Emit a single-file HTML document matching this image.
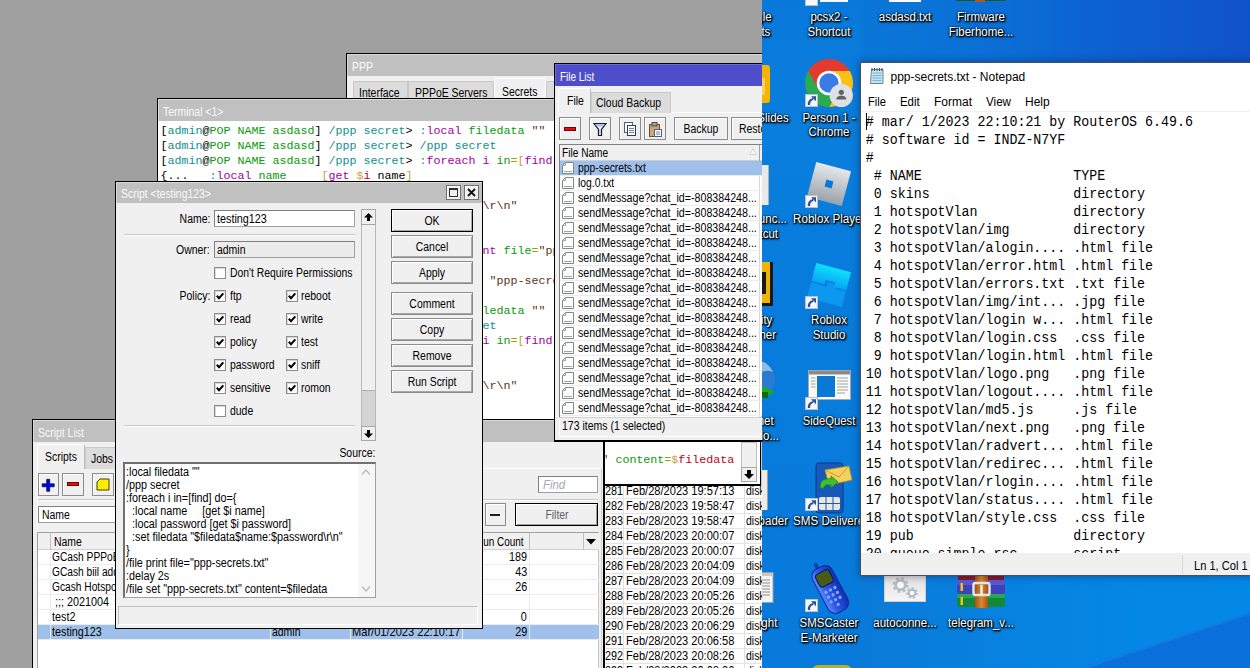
<!DOCTYPE html>
<html><head><meta charset="utf-8"><title>screen</title><style>
html,body{margin:0;padding:0;background:#a0a0a0;}
#r{position:relative;width:1250px;height:668px;overflow:hidden;background:#a0a0a0;font-family:"Liberation Sans",sans-serif;}
#r div,#r span,#r svg{position:absolute;box-sizing:border-box;}
#r span span{position:static;}
#wb{left:0;top:0;width:1250px;height:668px;clip-path:inset(0 488px 0 0);}
.ts{font-family:"Liberation Sans",sans-serif;white-space:pre;}
.tm{font-family:"Liberation Mono",monospace;white-space:pre;}
.btn{background:#f0f0f0;border:1px solid #8c8c8c;box-shadow:inset 1px 1px 0 #fff;}
.inp{background:#fff;border:1px solid #a0a0a0;border-top-color:#808080;border-left-color:#808080;}
</style></head><body><div id="r">
<div style="left:762px;top:0px;width:488px;height:668px;background:linear-gradient(180deg,#0879da 0%,#0a7edd 20%,#087cdc 45%,#077adb 100%);"></div>
<div style="left:860px;top:0px;width:390px;height:80px;background:linear-gradient(90deg,#0a78d8 0%,#0b6ed6 35%,#0d60d0 65%,#1052cb 100%);"></div>
<div style="left:860px;top:560px;width:390px;height:108px;background:linear-gradient(90deg,#0a7ad8 0%,#0782e0 40%,#0487e5 75%,#0488e6 100%);"></div>
<svg style="left:762px;top:0;width:488px;height:668px" viewBox="0 0 488 668"><polygon points="318,668 488,612 488,668" fill="#0a70dc"/><polygon points="318,668 488,612 488,614 326,668" fill="#1a86ea" opacity=".6"/></svg>
<div id="wb">
<div style="left:346px;top:53px;width:420px;height:60px;background:#f0f0f0;border:1px solid #000;"></div>
<div style="left:347px;top:54px;width:420px;height:22px;background:#c0c0c0;border-top:1px solid #dadada;border-left:1px solid #dadada;"></div>
<span class="ts" style="left:352px;transform-origin:0 50%;top:59.599999999999994px;font-size:12px;line-height:14px;color:#fafafa;transform:scaleX(0.87);">PPP</span>
<div style="left:353px;top:81px;width:55px;height:20px;background:#dcdcdc;border:1px solid #c8c8c8;border-bottom:none;"></div>
<div style="left:408px;top:81px;width:86px;height:20px;background:#dcdcdc;border:1px solid #c8c8c8;border-bottom:none;"></div>
<div style="left:494px;top:78px;width:52px;height:22px;background:#f0f0f0;border:1px solid #fff;border-bottom:none;"></div>
<div style="left:546px;top:81px;width:30px;height:20px;background:#dcdcdc;border:1px solid #c8c8c8;border-bottom:none;"></div>
<span class="ts" style="left:359px;transform-origin:0 50%;top:85.7px;font-size:12px;line-height:14px;color:#000;transform:scaleX(0.87);">Interface</span>
<span class="ts" style="left:415px;transform-origin:0 50%;top:85.7px;font-size:12px;line-height:14px;color:#000;transform:scaleX(0.87);">PPPoE Servers</span>
<span class="ts" style="left:502px;transform-origin:0 50%;top:84.5px;font-size:12px;line-height:14px;color:#000;transform:scaleX(0.87);">Secrets</span>
<div style="left:604px;top:441px;width:158px;height:240px;background:#fff;border-left:1px solid #000;"></div>
<div style="left:605px;top:497.5px;width:157px;height:1px;background:#e4e4e4;"></div>
<span class="ts" style="left:605px;transform-origin:0 50%;top:483.5px;font-size:12px;line-height:14px;color:#000;transform:scaleX(0.9);">281</span>
<span class="ts" style="left:626px;transform-origin:0 50%;top:483.5px;font-size:12px;line-height:14px;color:#000;transform:scaleX(0.923);">Feb/28/2023 19:57:13</span>
<span class="ts" style="left:746px;transform-origin:0 50%;top:483.5px;font-size:12px;line-height:14px;color:#000;transform:scaleX(0.87);">disk</span>
<div style="left:605px;top:512.5px;width:157px;height:1px;background:#e4e4e4;"></div>
<span class="ts" style="left:605px;transform-origin:0 50%;top:498.5px;font-size:12px;line-height:14px;color:#000;transform:scaleX(0.9);">282</span>
<span class="ts" style="left:626px;transform-origin:0 50%;top:498.5px;font-size:12px;line-height:14px;color:#000;transform:scaleX(0.923);">Feb/28/2023 19:58:47</span>
<span class="ts" style="left:746px;transform-origin:0 50%;top:498.5px;font-size:12px;line-height:14px;color:#000;transform:scaleX(0.87);">disk</span>
<div style="left:605px;top:527.5px;width:157px;height:1px;background:#e4e4e4;"></div>
<span class="ts" style="left:605px;transform-origin:0 50%;top:513.5px;font-size:12px;line-height:14px;color:#000;transform:scaleX(0.9);">283</span>
<span class="ts" style="left:626px;transform-origin:0 50%;top:513.5px;font-size:12px;line-height:14px;color:#000;transform:scaleX(0.923);">Feb/28/2023 19:58:47</span>
<span class="ts" style="left:746px;transform-origin:0 50%;top:513.5px;font-size:12px;line-height:14px;color:#000;transform:scaleX(0.87);">disk</span>
<div style="left:605px;top:542.5px;width:157px;height:1px;background:#e4e4e4;"></div>
<span class="ts" style="left:605px;transform-origin:0 50%;top:528.5px;font-size:12px;line-height:14px;color:#000;transform:scaleX(0.9);">284</span>
<span class="ts" style="left:626px;transform-origin:0 50%;top:528.5px;font-size:12px;line-height:14px;color:#000;transform:scaleX(0.923);">Feb/28/2023 20:00:07</span>
<span class="ts" style="left:746px;transform-origin:0 50%;top:528.5px;font-size:12px;line-height:14px;color:#000;transform:scaleX(0.87);">disk</span>
<div style="left:605px;top:557.5px;width:157px;height:1px;background:#e4e4e4;"></div>
<span class="ts" style="left:605px;transform-origin:0 50%;top:543.5px;font-size:12px;line-height:14px;color:#000;transform:scaleX(0.9);">285</span>
<span class="ts" style="left:626px;transform-origin:0 50%;top:543.5px;font-size:12px;line-height:14px;color:#000;transform:scaleX(0.923);">Feb/28/2023 20:00:07</span>
<span class="ts" style="left:746px;transform-origin:0 50%;top:543.5px;font-size:12px;line-height:14px;color:#000;transform:scaleX(0.87);">disk</span>
<div style="left:605px;top:572.5px;width:157px;height:1px;background:#e4e4e4;"></div>
<span class="ts" style="left:605px;transform-origin:0 50%;top:558.5px;font-size:12px;line-height:14px;color:#000;transform:scaleX(0.9);">286</span>
<span class="ts" style="left:626px;transform-origin:0 50%;top:558.5px;font-size:12px;line-height:14px;color:#000;transform:scaleX(0.923);">Feb/28/2023 20:04:09</span>
<span class="ts" style="left:746px;transform-origin:0 50%;top:558.5px;font-size:12px;line-height:14px;color:#000;transform:scaleX(0.87);">disk</span>
<div style="left:605px;top:587.5px;width:157px;height:1px;background:#e4e4e4;"></div>
<span class="ts" style="left:605px;transform-origin:0 50%;top:573.5px;font-size:12px;line-height:14px;color:#000;transform:scaleX(0.9);">287</span>
<span class="ts" style="left:626px;transform-origin:0 50%;top:573.5px;font-size:12px;line-height:14px;color:#000;transform:scaleX(0.923);">Feb/28/2023 20:04:09</span>
<span class="ts" style="left:746px;transform-origin:0 50%;top:573.5px;font-size:12px;line-height:14px;color:#000;transform:scaleX(0.87);">disk</span>
<div style="left:605px;top:602.5px;width:157px;height:1px;background:#e4e4e4;"></div>
<span class="ts" style="left:605px;transform-origin:0 50%;top:588.5px;font-size:12px;line-height:14px;color:#000;transform:scaleX(0.9);">288</span>
<span class="ts" style="left:626px;transform-origin:0 50%;top:588.5px;font-size:12px;line-height:14px;color:#000;transform:scaleX(0.923);">Feb/28/2023 20:05:26</span>
<span class="ts" style="left:746px;transform-origin:0 50%;top:588.5px;font-size:12px;line-height:14px;color:#000;transform:scaleX(0.87);">disk</span>
<div style="left:605px;top:617.5px;width:157px;height:1px;background:#e4e4e4;"></div>
<span class="ts" style="left:605px;transform-origin:0 50%;top:603.5px;font-size:12px;line-height:14px;color:#000;transform:scaleX(0.9);">289</span>
<span class="ts" style="left:626px;transform-origin:0 50%;top:603.5px;font-size:12px;line-height:14px;color:#000;transform:scaleX(0.923);">Feb/28/2023 20:05:26</span>
<span class="ts" style="left:746px;transform-origin:0 50%;top:603.5px;font-size:12px;line-height:14px;color:#000;transform:scaleX(0.87);">disk</span>
<div style="left:605px;top:632.5px;width:157px;height:1px;background:#e4e4e4;"></div>
<span class="ts" style="left:605px;transform-origin:0 50%;top:618.5px;font-size:12px;line-height:14px;color:#000;transform:scaleX(0.9);">290</span>
<span class="ts" style="left:626px;transform-origin:0 50%;top:618.5px;font-size:12px;line-height:14px;color:#000;transform:scaleX(0.923);">Feb/28/2023 20:06:29</span>
<span class="ts" style="left:746px;transform-origin:0 50%;top:618.5px;font-size:12px;line-height:14px;color:#000;transform:scaleX(0.87);">disk</span>
<div style="left:605px;top:647.5px;width:157px;height:1px;background:#e4e4e4;"></div>
<span class="ts" style="left:605px;transform-origin:0 50%;top:633.5px;font-size:12px;line-height:14px;color:#000;transform:scaleX(0.9);">291</span>
<span class="ts" style="left:626px;transform-origin:0 50%;top:633.5px;font-size:12px;line-height:14px;color:#000;transform:scaleX(0.923);">Feb/28/2023 20:06:58</span>
<span class="ts" style="left:746px;transform-origin:0 50%;top:633.5px;font-size:12px;line-height:14px;color:#000;transform:scaleX(0.87);">disk</span>
<div style="left:605px;top:662.5px;width:157px;height:1px;background:#e4e4e4;"></div>
<span class="ts" style="left:605px;transform-origin:0 50%;top:648.5px;font-size:12px;line-height:14px;color:#000;transform:scaleX(0.9);">292</span>
<span class="ts" style="left:626px;transform-origin:0 50%;top:648.5px;font-size:12px;line-height:14px;color:#000;transform:scaleX(0.923);">Feb/28/2023 20:08:26</span>
<span class="ts" style="left:746px;transform-origin:0 50%;top:648.5px;font-size:12px;line-height:14px;color:#000;transform:scaleX(0.87);">disk</span>
<div style="left:605px;top:677.5px;width:157px;height:1px;background:#e4e4e4;"></div>
<span class="ts" style="left:605px;transform-origin:0 50%;top:663.5px;font-size:12px;line-height:14px;color:#000;transform:scaleX(0.9);">293</span>
<span class="ts" style="left:626px;transform-origin:0 50%;top:663.5px;font-size:12px;line-height:14px;color:#000;transform:scaleX(0.923);">Feb/28/2023 20:08:26</span>
<span class="ts" style="left:746px;transform-origin:0 50%;top:663.5px;font-size:12px;line-height:14px;color:#000;transform:scaleX(0.87);">disk</span>
<div style="left:623px;top:486px;width:1px;height:190px;background:#e0e0e0;"></div>
<div style="left:744px;top:486px;width:1px;height:190px;background:#e0e0e0;"></div>
<div style="left:604px;top:441px;width:157px;height:45px;background:#fff;border:1px solid #000;border-top:none;border-bottom-width:2px;"></div>
<div style="left:761px;top:441px;width:1px;height:45px;background:#c8c8c8;"></div>
<div style="left:741px;top:442px;width:16px;height:40px;background:#f0f0f0;border:1px solid #c0c0c0;"></div>
<div style="left:741px;top:467px;width:16px;height:15px;background:#f0f0f0;border:1px solid #a8a8a8;"></div>
<svg style="left:744px;top:470px;width:10px;height:9px" viewBox="0 0 10 9"><path d="M3 0h4v4h3l-5 5-5-5h3z" fill="#000"/></svg>
<span class="tm" style="left:601.4px;transform-origin:0 50%;top:453.0px;font-size:11.667px;line-height:15px;color:#704020;">"</span>
<span class="tm" style="left:615.4px;transform-origin:0 50%;top:453.0px;font-size:11.667px;line-height:15px;color:#000;"><span style="color:#0a9a0a">content</span><span style="color:#a0a000">=</span><span style="color:#c8a050">$</span><span style="color:#c00020">filedata</span></span>
<div style="left:157px;top:98px;width:399px;height:322px;background:#fff;border:1px solid #000;"></div>
<div style="left:158px;top:99px;width:397px;height:22px;background:#c0c0c0;border-top:1px solid #dadada;border-left:1px solid #dadada;"></div>
<span class="ts" style="left:163px;transform-origin:0 50%;top:104.9px;font-size:12px;line-height:14px;color:#fafafa;transform:scaleX(0.87);">Terminal &lt;1&gt;</span>
<span class="tm" style="left:160.6px;transform-origin:0 50%;top:123.5px;font-size:11.667px;line-height:15px;color:#000;"><span style="color:#000">[</span><span style="color:#10908c">admin</span><span style="color:#000">@</span><span style="color:#0a9a0a">POP NAME asdasd</span><span style="color:#000">] </span><span style="color:#10908c">/ppp secret</span><span style="color:#000">&gt; </span><span style="color:#10908c">:</span><span style="color:#a000a0">local</span> <span style="color:#0a9a0a">filedata</span> <span style="color:#603020">""</span></span>
<span class="tm" style="left:160.6px;transform-origin:0 50%;top:138.5px;font-size:11.667px;line-height:15px;color:#000;"><span style="color:#000">[</span><span style="color:#10908c">admin</span><span style="color:#000">@</span><span style="color:#0a9a0a">POP NAME asdasd</span><span style="color:#000">] </span><span style="color:#10908c">/ppp secret</span><span style="color:#000">&gt; </span><span style="color:#10908c">/ppp secret</span></span>
<span class="tm" style="left:160.6px;transform-origin:0 50%;top:153.5px;font-size:11.667px;line-height:15px;color:#000;"><span style="color:#000">[</span><span style="color:#10908c">admin</span><span style="color:#000">@</span><span style="color:#0a9a0a">POP NAME asdasd</span><span style="color:#000">] </span><span style="color:#10908c">/ppp secret</span><span style="color:#000">&gt; </span><span style="color:#10908c">:</span><span style="color:#a000a0">foreach i</span> <span style="color:#0a9a0a">in</span><span style="color:#a0a000">=</span><span style="color:#c8a040">[</span><span style="color:#a000a0">find</span><span style="color:#c8a040">]</span> <span style="color:#0a9a0a">do</span><span style="color:#a0a000">=</span><span style="color:#c8a040">{</span></span>
<span class="tm" style="left:160.6px;transform-origin:0 50%;top:168.5px;font-size:11.667px;line-height:15px;color:#000;"><span style="color:#000">{...   </span><span style="color:#10908c">:</span><span style="color:#a000a0">local</span> <span style="color:#0a9a0a">name</span>     <span style="color:#c8a040">[</span><span style="color:#a000a0">get</span> <span style="color:#c8a040">$</span><span style="color:#c00020">i</span> <span style="color:#000">name</span><span style="color:#c8a040">]</span></span>
<span class="tm" style="left:160.6px;transform-origin:0 50%;top:183.5px;font-size:11.667px;line-height:15px;color:#000;"><span style="color:#000">{...   </span><span style="color:#10908c">:</span><span style="color:#a000a0">local</span> <span style="color:#0a9a0a">password</span> <span style="color:#c8a040">[</span><span style="color:#a000a0">get</span> <span style="color:#c8a040">$</span><span style="color:#c00020">i</span> <span style="color:#000">password</span><span style="color:#c8a040">]</span></span>
<span class="tm" style="left:160.6px;transform-origin:0 50%;top:198.5px;font-size:11.667px;line-height:15px;color:#000;"><span style="color:#000">{...   </span><span style="color:#10908c">:</span><span style="color:#a000a0">set</span> <span style="color:#0a9a0a">filedata</span> <span style="color:#603020">"$filedata$name:$password\r\n"</span></span>
<span class="tm" style="left:160.6px;transform-origin:0 50%;top:213.5px;font-size:11.667px;line-height:15px;color:#000;"><span style="color:#000">{... </span><span style="color:#c8a040">}</span></span>
<span class="tm" style="left:160.6px;transform-origin:0 50%;top:228.5px;font-size:11.667px;line-height:15px;color:#000;"><span style="color:#000">[</span><span style="color:#10908c">admin</span><span style="color:#000">@</span><span style="color:#0a9a0a">POP NAME asdasd</span><span style="color:#000">] </span><span style="color:#10908c">/ppp secret</span><span style="color:#000">&gt; </span></span>
<span class="tm" style="left:160.6px;transform-origin:0 50%;top:243.5px;font-size:11.667px;line-height:15px;color:#000;"><span style="color:#000">[</span><span style="color:#10908c">admin</span><span style="color:#000">@</span><span style="color:#0a9a0a">POP NAME asdasd</span><span style="color:#000">] </span><span style="color:#10908c">/ppp secret</span><span style="color:#000">&gt; </span><span style="color:#10908c">/file </span><span style="color:#a000a0">print</span> <span style="color:#0a9a0a">file</span><span style="color:#a0a000">=</span><span style="color:#603020">"ppp-secrets.txt"</span></span>
<span class="tm" style="left:160.6px;transform-origin:0 50%;top:273.5px;font-size:11.667px;line-height:15px;color:#000;"><span style="color:#000">[</span><span style="color:#10908c">admin</span><span style="color:#000">@</span><span style="color:#0a9a0a">POP NAME asdasd</span><span style="color:#000">] </span><span style="color:#10908c">/ppp secret</span><span style="color:#000">&gt; </span><span style="color:#10908c">/file </span><span style="color:#a000a0">set</span> <span style="color:#603020">"ppp-secrets.txt"</span> <span style="color:#0a9a0a">content</span><span style="color:#a0a000">=</span><span style="color:#c8a040">$</span><span style="color:#c00020">filedata</span></span>
<span class="tm" style="left:160.6px;transform-origin:0 50%;top:303.5px;font-size:11.667px;line-height:15px;color:#000;"><span style="color:#000">[</span><span style="color:#10908c">admin</span><span style="color:#000">@</span><span style="color:#0a9a0a">POP NAME asdasd</span><span style="color:#000">] </span><span style="color:#10908c">/ppp secret</span><span style="color:#000">&gt; </span><span style="color:#10908c">:</span><span style="color:#a000a0">local</span> <span style="color:#0a9a0a">filedata</span> <span style="color:#603020">""</span></span>
<span class="tm" style="left:160.6px;transform-origin:0 50%;top:318.5px;font-size:11.667px;line-height:15px;color:#000;"><span style="color:#000">[</span><span style="color:#10908c">admin</span><span style="color:#000">@</span><span style="color:#0a9a0a">POP NAME asdasd</span><span style="color:#000">] </span><span style="color:#10908c">/ppp secret</span><span style="color:#000">&gt; </span><span style="color:#10908c">/ppp secret</span></span>
<span class="tm" style="left:160.6px;transform-origin:0 50%;top:333.5px;font-size:11.667px;line-height:15px;color:#000;"><span style="color:#000">[</span><span style="color:#10908c">admin</span><span style="color:#000">@</span><span style="color:#0a9a0a">POP NAME asdasd</span><span style="color:#000">] </span><span style="color:#10908c">/ppp secret</span><span style="color:#000">&gt; </span><span style="color:#10908c">:</span><span style="color:#a000a0">foreach i</span> <span style="color:#0a9a0a">in</span><span style="color:#a0a000">=</span><span style="color:#c8a040">[</span><span style="color:#a000a0">find</span><span style="color:#c8a040">]</span> <span style="color:#0a9a0a">do</span><span style="color:#a0a000">=</span><span style="color:#c8a040">{</span></span>
<span class="tm" style="left:160.6px;transform-origin:0 50%;top:348.5px;font-size:11.667px;line-height:15px;color:#000;"><span style="color:#000">{...   </span><span style="color:#10908c">:</span><span style="color:#a000a0">local</span> <span style="color:#0a9a0a">name</span>     <span style="color:#c8a040">[</span><span style="color:#a000a0">get</span> <span style="color:#c8a040">$</span><span style="color:#c00020">i</span> <span style="color:#000">name</span><span style="color:#c8a040">]</span></span>
<span class="tm" style="left:160.6px;transform-origin:0 50%;top:363.5px;font-size:11.667px;line-height:15px;color:#000;"><span style="color:#000">{...   </span><span style="color:#10908c">:</span><span style="color:#a000a0">local</span> <span style="color:#0a9a0a">password</span> <span style="color:#c8a040">[</span><span style="color:#a000a0">get</span> <span style="color:#c8a040">$</span><span style="color:#c00020">i</span> <span style="color:#000">password</span><span style="color:#c8a040">]</span></span>
<span class="tm" style="left:160.6px;transform-origin:0 50%;top:378.5px;font-size:11.667px;line-height:15px;color:#000;"><span style="color:#000">{...   </span><span style="color:#10908c">:</span><span style="color:#a000a0">set</span> <span style="color:#0a9a0a">filedata</span> <span style="color:#603020">"$filedata$name:$password\r\n"</span></span>
<span class="tm" style="left:160.6px;transform-origin:0 50%;top:393.5px;font-size:11.667px;line-height:15px;color:#000;"><span style="color:#000">{... </span><span style="color:#c8a040">}</span></span>
<div style="left:32px;top:419px;width:573px;height:260px;background:#f0f0f0;border:1px solid #000;border-right:2px solid #000;"></div>
<div style="left:33px;top:420px;width:570px;height:22px;background:#c0c0c0;border-top:1px solid #dadada;border-left:1px solid #dadada;"></div>
<span class="ts" style="left:38px;transform-origin:0 50%;top:425.7px;font-size:12px;line-height:14px;color:#fafafa;transform:scaleX(0.87);">Script List</span>
<div style="left:37px;top:468px;width:565px;height:205px;border:1px solid #fff;border-right-color:#d0d0d0;"></div>
<div style="left:85px;top:447px;width:34px;height:22px;background:#dcdcdc;border:1px solid #c8c8c8;border-bottom:none;"></div>
<span class="ts" style="left:91px;transform-origin:0 50%;top:452.0px;font-size:12px;line-height:14px;color:#000;transform:scaleX(0.87);">Jobs</span>
<div style="left:37px;top:444px;width:48px;height:25px;background:#f0f0f0;border:1px solid #fff;border-bottom:none;border-right-color:#c0c0c0;"></div>
<span class="ts" style="left:45px;transform-origin:0 50%;top:450.0px;font-size:12px;line-height:14px;color:#000;transform:scaleX(0.87);">Scripts</span>
<div class="btn" style="left:38px;top:473px;width:21px;height:23px"></div>
<div class="btn" style="left:62px;top:473px;width:22px;height:23px"></div>
<div class="btn" style="left:92px;top:473px;width:22px;height:23px"></div>
<svg style="left:41px;top:478px;width:15px;height:15px" viewBox="0 0 15 15"><path d="M5.700 1.300h3v4.500h4.500v3H8.700v4.500h-3V8.800H1.200v-3h4.500z" fill="#0000e8" stroke="#000040" stroke-width=".7"/></svg>
<div style="left:67px;top:482px;width:12px;height:4px;background:#e01010;border:1px solid #800000;"></div>
<svg style="left:96px;top:478px;width:14px;height:13px" viewBox="0 0 14 13"><path d="M4 1h9v11H1V4z" fill="#ffee00" stroke="#404000" stroke-width="1"/></svg>
<div style="left:38px;top:499px;width:560px;height:1px;background:#c8c8c8;"></div>
<div style="left:38px;top:500px;width:560px;height:1px;background:#fff;"></div>
<div class="inp" style="left:538px;top:476px;width:60px;height:17px"></div>
<span class="ts" style="left:543px;transform-origin:0 50%;top:478.0px;font-size:12px;line-height:14px;color:#a8a8b8;transform:scaleX(0.95);font-style:italic;">Find</span>
<div class="inp" style="left:38px;top:506px;width:120px;height:17px"></div>
<span class="ts" style="left:42px;transform-origin:0 50%;top:508.0px;font-size:12px;line-height:14px;color:#000;transform:scaleX(0.87);">Name</span>
<div class="btn" style="left:485px;top:503px;width:21px;height:23px"></div>
<div style="left:490px;top:514px;width:10px;height:2px;background:#202020;"></div>
<div style="left:515px;top:503px;width:83px;height:23px;background:#f0f0f0;border:1px solid #000;box-shadow:inset 1px 1px 0 #fff,inset -1px -1px 0 #a0a0a0;"></div>
<span class="ts" style="left:356.5px;width:400px;text-align:center;transform-origin:50% 50%;top:508.0px;font-size:12px;line-height:14px;color:#606060;transform:scaleX(0.87);">Filter</span>
<div style="left:38px;top:533px;width:561px;height:140px;background:#fff;"></div>
<div style="left:38px;top:532px;width:561px;height:1px;background:#a0a0a0;"></div>
<div style="left:37px;top:532px;width:1px;height:140px;background:#a0a0a0;"></div>
<div style="left:598px;top:532px;width:1px;height:140px;background:#c8c8c8;"></div>
<div style="left:38px;top:533px;width:561px;height:17px;background:#f0f0f0;border-bottom:1px solid #d0d0d0;"></div>
<div style="left:50px;top:533px;width:1px;height:17px;background:#c0c0c0;"></div>
<div style="left:270px;top:533px;width:1px;height:17px;background:#c0c0c0;"></div>
<div style="left:350px;top:533px;width:1px;height:17px;background:#c0c0c0;"></div>
<div style="left:462px;top:533px;width:1px;height:17px;background:#c0c0c0;"></div>
<div style="left:529px;top:533px;width:1px;height:17px;background:#c0c0c0;"></div>
<div style="left:583px;top:533px;width:1px;height:17px;background:#c0c0c0;"></div>
<span class="ts" style="left:54px;transform-origin:0 50%;top:535.0px;font-size:12px;line-height:14px;color:#000;transform:scaleX(0.87);">Name</span>
<span class="ts" style="left:476px;transform-origin:0 50%;top:535.0px;font-size:12px;line-height:14px;color:#000;transform:scaleX(0.83);">Run Count</span>
<svg style="left:586px;top:539px;width:10px;height:6px" viewBox="0 0 10 6"><path d="M0 0h10l-5 5.500z" fill="#000"/></svg>
<div style="left:38px;top:564px;width:561px;height:1px;background:#ececec;"></div>
<span class="ts" style="left:52px;transform-origin:0 50%;top:550.0px;font-size:12px;line-height:14px;color:#000;transform:scaleX(0.85);">GCash PPPoE</span>
<span class="ts" style="right:723px;transform-origin:100% 50%;top:550.0px;font-size:12px;line-height:14px;color:#000;transform:scaleX(0.9);">189</span>
<div style="left:38px;top:579px;width:561px;height:1px;background:#ececec;"></div>
<span class="ts" style="left:52px;transform-origin:0 50%;top:565.0px;font-size:12px;line-height:14px;color:#000;transform:scaleX(0.85);">GCash biil adder</span>
<span class="ts" style="right:723px;transform-origin:100% 50%;top:565.0px;font-size:12px;line-height:14px;color:#000;transform:scaleX(0.9);">43</span>
<div style="left:38px;top:594px;width:561px;height:1px;background:#ececec;"></div>
<span class="ts" style="left:52px;transform-origin:0 50%;top:580.0px;font-size:12px;line-height:14px;color:#000;transform:scaleX(0.85);">Gcash Hotspot</span>
<span class="ts" style="right:723px;transform-origin:100% 50%;top:580.0px;font-size:12px;line-height:14px;color:#000;transform:scaleX(0.9);">26</span>
<div style="left:38px;top:609px;width:561px;height:1px;background:#ececec;"></div>
<span class="ts" style="left:52px;transform-origin:0 50%;top:595.0px;font-size:12px;line-height:14px;color:#000;transform:scaleX(0.9);"> ;;; 2021004</span>
<div style="left:38px;top:624px;width:561px;height:1px;background:#ececec;"></div>
<span class="ts" style="left:52px;transform-origin:0 50%;top:610.0px;font-size:12px;line-height:14px;color:#000;transform:scaleX(0.9);">test2</span>
<span class="ts" style="right:723px;transform-origin:100% 50%;top:610.0px;font-size:12px;line-height:14px;color:#000;transform:scaleX(0.9);">0</span>
<div style="left:38px;top:625px;width:561px;height:14px;background:#9fc0ea;"></div>
<div style="left:38px;top:639px;width:561px;height:1px;background:#ececec;"></div>
<span class="ts" style="left:52px;transform-origin:0 50%;top:625.0px;font-size:12px;line-height:14px;color:#000;transform:scaleX(0.9);">testing123</span>
<span class="ts" style="right:723px;transform-origin:100% 50%;top:625.0px;font-size:12px;line-height:14px;color:#000;transform:scaleX(0.9);">29</span>
<div style="left:50px;top:550px;width:1px;height:90px;background:#ececec;"></div>
<div style="left:270px;top:550px;width:1px;height:90px;background:#ececec;"></div>
<div style="left:350px;top:550px;width:1px;height:90px;background:#ececec;"></div>
<div style="left:462px;top:550px;width:1px;height:90px;background:#ececec;"></div>
<div style="left:529px;top:550px;width:1px;height:90px;background:#ececec;"></div>
<span class="ts" style="left:272px;transform-origin:0 50%;top:625.0px;font-size:12px;line-height:14px;color:#000;transform:scaleX(0.87);">admin</span>
<span class="ts" style="left:352px;transform-origin:0 50%;top:625.0px;font-size:12px;line-height:14px;color:#000;transform:scaleX(0.923);">Mar/01/2023 22:10:17</span>
<div style="left:554px;top:63px;width:216px;height:379px;background:#f0f0f0;border:1px solid #000;border-bottom-width:2px;"></div>
<div style="left:555px;top:64px;width:215px;height:21.5px;background:#4e4ecc;border-top:1px solid #6c6cd8;border-left:1px solid #6c6cd8;"></div>
<span class="ts" style="left:560px;transform-origin:0 50%;top:69.8px;font-size:12px;line-height:14px;color:#fff;transform:scaleX(0.83);">File List</span>
<div style="left:559px;top:112px;width:210px;height:325px;border:1px solid #fff;"></div>
<div style="left:591px;top:92px;width:80px;height:21px;background:#dcdcdc;border:1px solid #c8c8c8;border-bottom:none;"></div>
<span class="ts" style="left:596px;transform-origin:0 50%;top:96.0px;font-size:12px;line-height:14px;color:#000;transform:scaleX(0.87);">Cloud Backup</span>
<div style="left:558px;top:88px;width:33px;height:25px;background:#f0f0f0;border:1px solid #fff;border-bottom:none;border-right-color:#c0c0c0;"></div>
<span class="ts" style="left:567px;transform-origin:0 50%;top:94.0px;font-size:12px;line-height:14px;color:#000;transform:scaleX(0.87);">File</span>
<div class="btn" style="left:559px;top:117px;width:22px;height:23px"></div>
<div class="btn" style="left:589px;top:117px;width:22px;height:23px"></div>
<div class="btn" style="left:619px;top:117px;width:22px;height:23px"></div>
<div class="btn" style="left:644px;top:117px;width:22px;height:23px"></div>
<div class="btn" style="left:674px;top:117px;width:54px;height:23px"></div>
<div class="btn" style="left:731px;top:117px;width:40px;height:23px"></div>
<div style="left:564px;top:127px;width:12px;height:4px;background:#e01010;border:1px solid #800000;"></div>
<svg style="left:593px;top:122px;width:14px;height:15px" viewBox="0 0 14 15"><path d="M1 1.500h12L8.500 7.500v6h-3v-6z" fill="#dce8f8" stroke="#101828" stroke-width="1.200"/><path d="M2.500 2.500h9l-1 1.500h-7z" fill="#9ab8e0"/></svg>
<svg style="left:622px;top:120px;width:16px;height:17px" viewBox="0 0 16 17"><rect x="2.500" y="2.500" width="8" height="10" fill="#fff" stroke="#506080"/><rect x="5.500" y="5.500" width="8" height="10" fill="#fff" stroke="#304060"/><path d="M7 8.500h5M7 10.500h5M7 12.500h5" stroke="#506080" stroke-width=".8"/></svg>
<svg style="left:647px;top:121px;width:16px;height:17px" viewBox="0 0 16 17"><rect x="2.500" y="3.500" width="10" height="12" fill="#c8a878" stroke="#705030"/><rect x="5" y="1.500" width="5" height="3.500" fill="#a0a0a0" stroke="#505050"/><rect x="7.500" y="8.500" width="7" height="7" fill="#fff" stroke="#506080"/><path d="M9 11h4M9 13h4" stroke="#506080" stroke-width=".8"/></svg>
<span class="ts" style="left:501px;width:400px;text-align:center;transform-origin:50% 50%;top:122.0px;font-size:12px;line-height:14px;color:#000;transform:scaleX(0.87);">Backup</span>
<span class="ts" style="left:739px;transform-origin:0 50%;top:122.0px;font-size:12px;line-height:14px;color:#000;transform:scaleX(0.87);">Restore</span>
<div style="left:559px;top:144px;width:211px;height:273px;background:#fff;border-top:1px solid #808080;border-left:1px solid #808080;"></div>
<div style="left:560px;top:145px;width:210px;height:16px;background:#f0f0f0;border-bottom:1px solid #d0d0d0;"></div>
<div style="left:759px;top:145px;width:1px;height:272px;background:#d8d8d8;"></div>
<div style="left:759px;top:145px;width:1px;height:16px;background:#a0a0a0;"></div>
<span class="ts" style="left:562px;transform-origin:0 50%;top:146.0px;font-size:12px;line-height:14px;color:#000;transform:scaleX(0.845);">File Name</span>
<svg style="left:749px;top:148px;width:8px;height:7px" viewBox="0 0 8 7"><path d="M4 .5L7.500 6.500H.5z" fill="#f8f8f8" stroke="#cccccc" stroke-width=".8"/></svg>
<div style="left:560px;top:161px;width:210px;height:14px;background:#9fc0ea;"></div>
<div style="left:560px;top:175px;width:210px;height:1px;background:#ececec;"></div>
<svg style="left:562px;top:162px;width:12px;height:12px" viewBox="0 0 12 12"><path d="M3.500 .5h8v11H.5V3.500z" fill="#fff" stroke="#7a8a82" stroke-width="1"/><path d="M3.500 .5v3H.5M2 9.500h8" fill="none" stroke="#9aa8a0" stroke-width="1"/></svg>
<span class="ts" style="left:577.5px;transform-origin:0 50%;top:161.0px;font-size:12px;line-height:14px;color:#000;transform:scaleX(0.862);">ppp-secrets.txt</span>
<div style="left:560px;top:190px;width:210px;height:1px;background:#ececec;"></div>
<svg style="left:562px;top:177px;width:12px;height:12px" viewBox="0 0 12 12"><path d="M3.500 .5h8v11H.5V3.500z" fill="#fff" stroke="#7a8a82" stroke-width="1"/><path d="M3.500 .5v3H.5M2 9.500h8" fill="none" stroke="#9aa8a0" stroke-width="1"/></svg>
<span class="ts" style="left:577.5px;transform-origin:0 50%;top:176.0px;font-size:12px;line-height:14px;color:#000;transform:scaleX(0.862);">log.0.txt</span>
<div style="left:560px;top:205px;width:210px;height:1px;background:#ececec;"></div>
<svg style="left:562px;top:192px;width:12px;height:12px" viewBox="0 0 12 12"><path d="M3.500 .5h8v11H.5V3.500z" fill="#fff" stroke="#7a8a82" stroke-width="1"/><path d="M3.500 .5v3H.5M2 9.500h8" fill="none" stroke="#9aa8a0" stroke-width="1"/></svg>
<span class="ts" style="left:577.5px;transform-origin:0 50%;top:191.0px;font-size:12px;line-height:14px;color:#000;transform:scaleX(0.889);">sendMessage?chat_id=-808384248...</span>
<div style="left:560px;top:220px;width:210px;height:1px;background:#ececec;"></div>
<svg style="left:562px;top:207px;width:12px;height:12px" viewBox="0 0 12 12"><path d="M3.500 .5h8v11H.5V3.500z" fill="#fff" stroke="#7a8a82" stroke-width="1"/><path d="M3.500 .5v3H.5M2 9.500h8" fill="none" stroke="#9aa8a0" stroke-width="1"/></svg>
<span class="ts" style="left:577.5px;transform-origin:0 50%;top:206.0px;font-size:12px;line-height:14px;color:#000;transform:scaleX(0.889);">sendMessage?chat_id=-808384248...</span>
<div style="left:560px;top:235px;width:210px;height:1px;background:#ececec;"></div>
<svg style="left:562px;top:222px;width:12px;height:12px" viewBox="0 0 12 12"><path d="M3.500 .5h8v11H.5V3.500z" fill="#fff" stroke="#7a8a82" stroke-width="1"/><path d="M3.500 .5v3H.5M2 9.500h8" fill="none" stroke="#9aa8a0" stroke-width="1"/></svg>
<span class="ts" style="left:577.5px;transform-origin:0 50%;top:221.0px;font-size:12px;line-height:14px;color:#000;transform:scaleX(0.889);">sendMessage?chat_id=-808384248...</span>
<div style="left:560px;top:250px;width:210px;height:1px;background:#ececec;"></div>
<svg style="left:562px;top:237px;width:12px;height:12px" viewBox="0 0 12 12"><path d="M3.500 .5h8v11H.5V3.500z" fill="#fff" stroke="#7a8a82" stroke-width="1"/><path d="M3.500 .5v3H.5M2 9.500h8" fill="none" stroke="#9aa8a0" stroke-width="1"/></svg>
<span class="ts" style="left:577.5px;transform-origin:0 50%;top:236.0px;font-size:12px;line-height:14px;color:#000;transform:scaleX(0.889);">sendMessage?chat_id=-808384248...</span>
<div style="left:560px;top:265px;width:210px;height:1px;background:#ececec;"></div>
<svg style="left:562px;top:252px;width:12px;height:12px" viewBox="0 0 12 12"><path d="M3.500 .5h8v11H.5V3.500z" fill="#fff" stroke="#7a8a82" stroke-width="1"/><path d="M3.500 .5v3H.5M2 9.500h8" fill="none" stroke="#9aa8a0" stroke-width="1"/></svg>
<span class="ts" style="left:577.5px;transform-origin:0 50%;top:251.0px;font-size:12px;line-height:14px;color:#000;transform:scaleX(0.889);">sendMessage?chat_id=-808384248...</span>
<div style="left:560px;top:280px;width:210px;height:1px;background:#ececec;"></div>
<svg style="left:562px;top:267px;width:12px;height:12px" viewBox="0 0 12 12"><path d="M3.500 .5h8v11H.5V3.500z" fill="#fff" stroke="#7a8a82" stroke-width="1"/><path d="M3.500 .5v3H.5M2 9.500h8" fill="none" stroke="#9aa8a0" stroke-width="1"/></svg>
<span class="ts" style="left:577.5px;transform-origin:0 50%;top:266.0px;font-size:12px;line-height:14px;color:#000;transform:scaleX(0.889);">sendMessage?chat_id=-808384248...</span>
<div style="left:560px;top:295px;width:210px;height:1px;background:#ececec;"></div>
<svg style="left:562px;top:282px;width:12px;height:12px" viewBox="0 0 12 12"><path d="M3.500 .5h8v11H.5V3.500z" fill="#fff" stroke="#7a8a82" stroke-width="1"/><path d="M3.500 .5v3H.5M2 9.500h8" fill="none" stroke="#9aa8a0" stroke-width="1"/></svg>
<span class="ts" style="left:577.5px;transform-origin:0 50%;top:281.0px;font-size:12px;line-height:14px;color:#000;transform:scaleX(0.889);">sendMessage?chat_id=-808384248...</span>
<div style="left:560px;top:310px;width:210px;height:1px;background:#ececec;"></div>
<svg style="left:562px;top:297px;width:12px;height:12px" viewBox="0 0 12 12"><path d="M3.500 .5h8v11H.5V3.500z" fill="#fff" stroke="#7a8a82" stroke-width="1"/><path d="M3.500 .5v3H.5M2 9.500h8" fill="none" stroke="#9aa8a0" stroke-width="1"/></svg>
<span class="ts" style="left:577.5px;transform-origin:0 50%;top:296.0px;font-size:12px;line-height:14px;color:#000;transform:scaleX(0.889);">sendMessage?chat_id=-808384248...</span>
<div style="left:560px;top:325px;width:210px;height:1px;background:#ececec;"></div>
<svg style="left:562px;top:312px;width:12px;height:12px" viewBox="0 0 12 12"><path d="M3.500 .5h8v11H.5V3.500z" fill="#fff" stroke="#7a8a82" stroke-width="1"/><path d="M3.500 .5v3H.5M2 9.500h8" fill="none" stroke="#9aa8a0" stroke-width="1"/></svg>
<span class="ts" style="left:577.5px;transform-origin:0 50%;top:311.0px;font-size:12px;line-height:14px;color:#000;transform:scaleX(0.889);">sendMessage?chat_id=-808384248...</span>
<div style="left:560px;top:340px;width:210px;height:1px;background:#ececec;"></div>
<svg style="left:562px;top:327px;width:12px;height:12px" viewBox="0 0 12 12"><path d="M3.500 .5h8v11H.5V3.500z" fill="#fff" stroke="#7a8a82" stroke-width="1"/><path d="M3.500 .5v3H.5M2 9.500h8" fill="none" stroke="#9aa8a0" stroke-width="1"/></svg>
<span class="ts" style="left:577.5px;transform-origin:0 50%;top:326.0px;font-size:12px;line-height:14px;color:#000;transform:scaleX(0.889);">sendMessage?chat_id=-808384248...</span>
<div style="left:560px;top:355px;width:210px;height:1px;background:#ececec;"></div>
<svg style="left:562px;top:342px;width:12px;height:12px" viewBox="0 0 12 12"><path d="M3.500 .5h8v11H.5V3.500z" fill="#fff" stroke="#7a8a82" stroke-width="1"/><path d="M3.500 .5v3H.5M2 9.500h8" fill="none" stroke="#9aa8a0" stroke-width="1"/></svg>
<span class="ts" style="left:577.5px;transform-origin:0 50%;top:341.0px;font-size:12px;line-height:14px;color:#000;transform:scaleX(0.889);">sendMessage?chat_id=-808384248...</span>
<div style="left:560px;top:370px;width:210px;height:1px;background:#ececec;"></div>
<svg style="left:562px;top:357px;width:12px;height:12px" viewBox="0 0 12 12"><path d="M3.500 .5h8v11H.5V3.500z" fill="#fff" stroke="#7a8a82" stroke-width="1"/><path d="M3.500 .5v3H.5M2 9.500h8" fill="none" stroke="#9aa8a0" stroke-width="1"/></svg>
<span class="ts" style="left:577.5px;transform-origin:0 50%;top:356.0px;font-size:12px;line-height:14px;color:#000;transform:scaleX(0.889);">sendMessage?chat_id=-808384248...</span>
<div style="left:560px;top:385px;width:210px;height:1px;background:#ececec;"></div>
<svg style="left:562px;top:372px;width:12px;height:12px" viewBox="0 0 12 12"><path d="M3.500 .5h8v11H.5V3.500z" fill="#fff" stroke="#7a8a82" stroke-width="1"/><path d="M3.500 .5v3H.5M2 9.500h8" fill="none" stroke="#9aa8a0" stroke-width="1"/></svg>
<span class="ts" style="left:577.5px;transform-origin:0 50%;top:371.0px;font-size:12px;line-height:14px;color:#000;transform:scaleX(0.889);">sendMessage?chat_id=-808384248...</span>
<div style="left:560px;top:400px;width:210px;height:1px;background:#ececec;"></div>
<svg style="left:562px;top:387px;width:12px;height:12px" viewBox="0 0 12 12"><path d="M3.500 .5h8v11H.5V3.500z" fill="#fff" stroke="#7a8a82" stroke-width="1"/><path d="M3.500 .5v3H.5M2 9.500h8" fill="none" stroke="#9aa8a0" stroke-width="1"/></svg>
<span class="ts" style="left:577.5px;transform-origin:0 50%;top:386.0px;font-size:12px;line-height:14px;color:#000;transform:scaleX(0.889);">sendMessage?chat_id=-808384248...</span>
<div style="left:560px;top:415px;width:210px;height:1px;background:#ececec;"></div>
<svg style="left:562px;top:402px;width:12px;height:12px" viewBox="0 0 12 12"><path d="M3.500 .5h8v11H.5V3.500z" fill="#fff" stroke="#7a8a82" stroke-width="1"/><path d="M3.500 .5v3H.5M2 9.500h8" fill="none" stroke="#9aa8a0" stroke-width="1"/></svg>
<span class="ts" style="left:577.5px;transform-origin:0 50%;top:401.0px;font-size:12px;line-height:14px;color:#000;transform:scaleX(0.889);">sendMessage?chat_id=-808384248...</span>
<div style="left:559px;top:417px;width:210px;height:1px;background:#d0d0d0;"></div>
<span class="ts" style="left:562px;transform-origin:0 50%;top:419.0px;font-size:12px;line-height:14px;color:#000;transform:scaleX(0.875);">173 items (1 selected)</span>
</div><div id="wb2" style="left:0;top:0;width:1250px;height:668px;clip-path:inset(0 488px 0 0)">
<div style="left:115px;top:181px;width:368px;height:448px;background:#f0f0f0;border:1px solid #000;"></div>
<div style="left:116px;top:182px;width:366px;height:21px;background:#c0c0c0;border-top:1px solid #dadada;border-left:1px solid #dadada;"></div>
<span class="ts" style="left:121px;transform-origin:0 50%;top:187.0px;font-size:12px;line-height:14px;color:#fafafa;transform:scaleX(0.87);">Script &lt;testing123&gt;</span>
<div style="left:446px;top:185px;width:15px;height:15px;background:#f0f0f0;border:1px solid #707070;box-shadow:inset 1px 1px 0 #fff;"></div>
<div style="left:464px;top:185px;width:15px;height:15px;background:#f0f0f0;border:1px solid #707070;box-shadow:inset 1px 1px 0 #fff;"></div>
<div style="left:449px;top:188px;width:9px;height:9px;border:1px solid #303030;border-top-width:2px;"></div>
<svg style="left:467px;top:188px;width:9px;height:9px" viewBox="0 0 9 9"><path d="M1 1l7 7M8 1l-7 7" stroke="#101010" stroke-width="1.800"/></svg>
<span class="ts" style="right:1040px;transform-origin:100% 50%;top:211.5px;font-size:12px;line-height:14px;color:#000;transform:scaleX(0.87);">Name:</span>
<div class="inp" style="left:214px;top:210px;width:141px;height:17px"></div>
<span class="ts" style="left:217px;transform-origin:0 50%;top:211.5px;font-size:12px;line-height:14px;color:#000;transform:scaleX(0.9);">testing123</span>
<div style="left:124px;top:234px;width:231px;height:1px;background:#c8c8c8;"></div>
<div style="left:124px;top:235px;width:231px;height:1px;background:#fff;"></div>
<span class="ts" style="right:1040px;transform-origin:100% 50%;top:242.5px;font-size:12px;line-height:14px;color:#000;transform:scaleX(0.87);">Owner:</span>
<div class="inp" style="left:214px;top:241px;width:141px;height:17px;background:#ececec"></div>
<span class="ts" style="left:217px;transform-origin:0 50%;top:242.5px;font-size:12px;line-height:14px;color:#000;transform:scaleX(0.87);">admin</span>
<div style="left:214px;top:267px;width:12px;height:12px;background:#fff;border:1px solid #8c8c8c;box-shadow:inset 1px 1px 0 #d8d8d8"></div>
<span class="ts" style="left:230px;transform-origin:0 50%;top:266.0px;font-size:12px;line-height:14px;color:#000;transform:scaleX(0.865);">Don't Require Permissions</span>
<span class="ts" style="right:1040px;transform-origin:100% 50%;top:289.0px;font-size:12px;line-height:14px;color:#000;transform:scaleX(0.87);">Policy:</span>
<div style="left:214px;top:290px;width:12px;height:12px;background:#fff;border:1px solid #8c8c8c;box-shadow:inset 1px 1px 0 #d8d8d8"></div>
<svg style="left:214px;top:290px;width:12px;height:12px" viewBox="0 0 12 12"><path d="M2.800 5.800L5 8.200 9.300 3.300" fill="none" stroke="#000" stroke-width="2"/></svg>
<span class="ts" style="left:230px;transform-origin:0 50%;top:289.0px;font-size:12px;line-height:14px;color:#000;transform:scaleX(0.87);">ftp</span>
<div style="left:286px;top:290px;width:12px;height:12px;background:#fff;border:1px solid #8c8c8c;box-shadow:inset 1px 1px 0 #d8d8d8"></div>
<svg style="left:286px;top:290px;width:12px;height:12px" viewBox="0 0 12 12"><path d="M2.800 5.800L5 8.200 9.300 3.300" fill="none" stroke="#000" stroke-width="2"/></svg>
<span class="ts" style="left:300.5px;transform-origin:0 50%;top:289.0px;font-size:12px;line-height:14px;color:#000;transform:scaleX(0.87);">reboot</span>
<div style="left:214px;top:313px;width:12px;height:12px;background:#fff;border:1px solid #8c8c8c;box-shadow:inset 1px 1px 0 #d8d8d8"></div>
<svg style="left:214px;top:313px;width:12px;height:12px" viewBox="0 0 12 12"><path d="M2.800 5.800L5 8.200 9.300 3.300" fill="none" stroke="#000" stroke-width="2"/></svg>
<span class="ts" style="left:230px;transform-origin:0 50%;top:312.0px;font-size:12px;line-height:14px;color:#000;transform:scaleX(0.87);">read</span>
<div style="left:286px;top:313px;width:12px;height:12px;background:#fff;border:1px solid #8c8c8c;box-shadow:inset 1px 1px 0 #d8d8d8"></div>
<svg style="left:286px;top:313px;width:12px;height:12px" viewBox="0 0 12 12"><path d="M2.800 5.800L5 8.200 9.300 3.300" fill="none" stroke="#000" stroke-width="2"/></svg>
<span class="ts" style="left:300.5px;transform-origin:0 50%;top:312.0px;font-size:12px;line-height:14px;color:#000;transform:scaleX(0.87);">write</span>
<div style="left:214px;top:336px;width:12px;height:12px;background:#fff;border:1px solid #8c8c8c;box-shadow:inset 1px 1px 0 #d8d8d8"></div>
<svg style="left:214px;top:336px;width:12px;height:12px" viewBox="0 0 12 12"><path d="M2.800 5.800L5 8.200 9.300 3.300" fill="none" stroke="#000" stroke-width="2"/></svg>
<span class="ts" style="left:230px;transform-origin:0 50%;top:335.0px;font-size:12px;line-height:14px;color:#000;transform:scaleX(0.87);">policy</span>
<div style="left:286px;top:336px;width:12px;height:12px;background:#fff;border:1px solid #8c8c8c;box-shadow:inset 1px 1px 0 #d8d8d8"></div>
<svg style="left:286px;top:336px;width:12px;height:12px" viewBox="0 0 12 12"><path d="M2.800 5.800L5 8.200 9.300 3.300" fill="none" stroke="#000" stroke-width="2"/></svg>
<span class="ts" style="left:300.5px;transform-origin:0 50%;top:335.0px;font-size:12px;line-height:14px;color:#000;transform:scaleX(0.87);">test</span>
<div style="left:214px;top:359px;width:12px;height:12px;background:#fff;border:1px solid #8c8c8c;box-shadow:inset 1px 1px 0 #d8d8d8"></div>
<svg style="left:214px;top:359px;width:12px;height:12px" viewBox="0 0 12 12"><path d="M2.800 5.800L5 8.200 9.300 3.300" fill="none" stroke="#000" stroke-width="2"/></svg>
<span class="ts" style="left:230px;transform-origin:0 50%;top:358.0px;font-size:12px;line-height:14px;color:#000;transform:scaleX(0.87);">password</span>
<div style="left:286px;top:359px;width:12px;height:12px;background:#fff;border:1px solid #8c8c8c;box-shadow:inset 1px 1px 0 #d8d8d8"></div>
<svg style="left:286px;top:359px;width:12px;height:12px" viewBox="0 0 12 12"><path d="M2.800 5.800L5 8.200 9.300 3.300" fill="none" stroke="#000" stroke-width="2"/></svg>
<span class="ts" style="left:300.5px;transform-origin:0 50%;top:358.0px;font-size:12px;line-height:14px;color:#000;transform:scaleX(0.87);">sniff</span>
<div style="left:214px;top:382px;width:12px;height:12px;background:#fff;border:1px solid #8c8c8c;box-shadow:inset 1px 1px 0 #d8d8d8"></div>
<svg style="left:214px;top:382px;width:12px;height:12px" viewBox="0 0 12 12"><path d="M2.800 5.800L5 8.200 9.300 3.300" fill="none" stroke="#000" stroke-width="2"/></svg>
<span class="ts" style="left:230px;transform-origin:0 50%;top:381.0px;font-size:12px;line-height:14px;color:#000;transform:scaleX(0.87);">sensitive</span>
<div style="left:286px;top:382px;width:12px;height:12px;background:#fff;border:1px solid #8c8c8c;box-shadow:inset 1px 1px 0 #d8d8d8"></div>
<svg style="left:286px;top:382px;width:12px;height:12px" viewBox="0 0 12 12"><path d="M2.800 5.800L5 8.200 9.300 3.300" fill="none" stroke="#000" stroke-width="2"/></svg>
<span class="ts" style="left:300.5px;transform-origin:0 50%;top:381.0px;font-size:12px;line-height:14px;color:#000;transform:scaleX(0.87);">romon</span>
<div style="left:214px;top:405px;width:12px;height:12px;background:#fff;border:1px solid #8c8c8c;box-shadow:inset 1px 1px 0 #d8d8d8"></div>
<span class="ts" style="left:230px;transform-origin:0 50%;top:404.0px;font-size:12px;line-height:14px;color:#000;transform:scaleX(0.87);">dude</span>
<div style="left:124px;top:425px;width:231px;height:1px;background:#c8c8c8;"></div>
<div style="left:124px;top:426px;width:231px;height:1px;background:#fff;"></div>
<div style="left:361px;top:209px;width:15px;height:232px;background:#f0f0f0;border:1px solid #b8b8b8;"></div>
<div style="left:361px;top:209px;width:15px;height:16px;background:#f0f0f0;border:1px solid #a8a8a8;"></div>
<div style="left:361px;top:426px;width:15px;height:15px;background:#f0f0f0;border:1px solid #a8a8a8;"></div>
<div style="left:362px;top:390px;width:13px;height:36px;background:#d4d4d4;border-top:1px solid #b0b0b0;"></div>
<svg style="left:364px;top:213px;width:9px;height:8px" viewBox="0 0 9 8"><path d="M4.500 0l4.500 4.500H6V8H3V4.500H0z" fill="#000"/></svg>
<svg style="left:364px;top:430px;width:9px;height:8px" viewBox="0 0 9 8"><path d="M4.500 8L0 3.500h3V0h3v3.500h3z" fill="#000"/></svg>
<div style="left:391px;top:209px;width:82px;height:23px;background:#f0f0f0;border:1px solid #000;box-shadow:inset 1px 1px 0 #fff,inset -1px -1px 0 #a8a8a8;"></div>
<span class="ts" style="left:232px;width:400px;text-align:center;transform-origin:50% 50%;top:213.5px;font-size:12px;line-height:14px;color:#000;transform:scaleX(0.87);">OK</span>
<div style="left:391px;top:235px;width:82px;height:23px;background:#f0f0f0;border:1px solid #8c8c8c;box-shadow:inset 1px 1px 0 #fff,inset -1px -1px 0 #a8a8a8;"></div>
<span class="ts" style="left:232px;width:400px;text-align:center;transform-origin:50% 50%;top:239.5px;font-size:12px;line-height:14px;color:#000;transform:scaleX(0.87);">Cancel</span>
<div style="left:391px;top:261px;width:82px;height:23px;background:#f0f0f0;border:1px solid #8c8c8c;box-shadow:inset 1px 1px 0 #fff,inset -1px -1px 0 #a8a8a8;"></div>
<span class="ts" style="left:232px;width:400px;text-align:center;transform-origin:50% 50%;top:265.5px;font-size:12px;line-height:14px;color:#000;transform:scaleX(0.87);">Apply</span>
<div style="left:391px;top:292px;width:82px;height:23px;background:#f0f0f0;border:1px solid #8c8c8c;box-shadow:inset 1px 1px 0 #fff,inset -1px -1px 0 #a8a8a8;"></div>
<span class="ts" style="left:232px;width:400px;text-align:center;transform-origin:50% 50%;top:296.5px;font-size:12px;line-height:14px;color:#000;transform:scaleX(0.87);">Comment</span>
<div style="left:391px;top:318px;width:82px;height:23px;background:#f0f0f0;border:1px solid #8c8c8c;box-shadow:inset 1px 1px 0 #fff,inset -1px -1px 0 #a8a8a8;"></div>
<span class="ts" style="left:232px;width:400px;text-align:center;transform-origin:50% 50%;top:322.5px;font-size:12px;line-height:14px;color:#000;transform:scaleX(0.87);">Copy</span>
<div style="left:391px;top:344px;width:82px;height:23px;background:#f0f0f0;border:1px solid #8c8c8c;box-shadow:inset 1px 1px 0 #fff,inset -1px -1px 0 #a8a8a8;"></div>
<span class="ts" style="left:232px;width:400px;text-align:center;transform-origin:50% 50%;top:348.5px;font-size:12px;line-height:14px;color:#000;transform:scaleX(0.87);">Remove</span>
<div style="left:391px;top:370px;width:82px;height:23px;background:#f0f0f0;border:1px solid #8c8c8c;box-shadow:inset 1px 1px 0 #fff,inset -1px -1px 0 #a8a8a8;"></div>
<span class="ts" style="left:232px;width:400px;text-align:center;transform-origin:50% 50%;top:374.5px;font-size:12px;line-height:14px;color:#000;transform:scaleX(0.87);">Run Script</span>
<span class="ts" style="right:874.5px;transform-origin:100% 50%;top:446.0px;font-size:12px;line-height:14px;color:#000;transform:scaleX(0.87);">Source:</span>
<div style="left:123px;top:462px;width:253px;height:136px;background:#fff;border:1px solid #a0a0a0;border-top:2px solid #707070;border-left:2px solid #707070;"></div>
<div style="left:358px;top:464px;width:17px;height:133px;background:#f6f6f6;"></div>
<svg style="left:361px;top:469px;width:10px;height:6px" viewBox="0 0 10 6"><path d="M1 5.500L5 1l4 4.500" fill="none" stroke="#b8b8b8" stroke-width="1.200"/></svg>
<svg style="left:361px;top:586px;width:10px;height:6px" viewBox="0 0 10 6"><path d="M1 .5L5 5l4-4.500" fill="none" stroke="#b8b8b8" stroke-width="1.200"/></svg>
<span class="ts" style="left:126px;transform-origin:0 50%;top:464.5px;font-size:12px;line-height:14px;color:#000;transform:scaleX(0.9);">:local filedata ""</span>
<span class="ts" style="left:126px;transform-origin:0 50%;top:477.5px;font-size:12px;line-height:14px;color:#000;transform:scaleX(0.9);">/ppp secret</span>
<span class="ts" style="left:126px;transform-origin:0 50%;top:490.5px;font-size:12px;line-height:14px;color:#000;transform:scaleX(0.9);">:foreach i in=[find] do={</span>
<span class="ts" style="left:126px;transform-origin:0 50%;top:503.5px;font-size:12px;line-height:14px;color:#000;transform:scaleX(0.9);">  :local name     [get $i name]</span>
<span class="ts" style="left:126px;transform-origin:0 50%;top:516.5px;font-size:12px;line-height:14px;color:#000;transform:scaleX(0.9);">  :local password [get $i password]</span>
<span class="ts" style="left:126px;transform-origin:0 50%;top:529.5px;font-size:12px;line-height:14px;color:#000;transform:scaleX(0.9);">  :set filedata "$filedata$name:$password\r\n"</span>
<span class="ts" style="left:126px;transform-origin:0 50%;top:542.5px;font-size:12px;line-height:14px;color:#000;transform:scaleX(0.9);">}</span>
<span class="ts" style="left:126px;transform-origin:0 50%;top:555.5px;font-size:12px;line-height:14px;color:#000;transform:scaleX(0.9);">/file print file="ppp-secrets.txt"</span>
<span class="ts" style="left:126px;transform-origin:0 50%;top:568.5px;font-size:12px;line-height:14px;color:#000;transform:scaleX(0.9);">:delay 2s</span>
<span class="ts" style="left:126px;transform-origin:0 50%;top:581.5px;font-size:12px;line-height:14px;color:#000;transform:scaleX(0.9);">/file set "ppp-secrets.txt" content=$filedata</span>
<div style="left:118px;top:606px;width:360px;height:19px;background:#f0f0f0;border:1px solid #fff;border-top-color:#c0c0c0;border-left-color:#c0c0c0;"></div>
</div>
<div id="dkc" style="left:0;top:0;width:1250px;height:668px;clip-path:inset(0 0 0 762px)">
<div id="dk" style="left:762px;top:0;width:488px;height:668px;overflow:hidden">
<div style="left:43px;top:-6px;width:13px;height:12px;background:#f4f6fa;border:1px solid #b8c0cc;"></div>
<div style="left:58px;top:-6px;width:28px;height:8px;background:#f8f8f8;"></div>
<div style="left:127px;top:-6px;width:32px;height:8px;background:#fbfbfb;"></div>
<div style="left:194px;top:-6px;width:50px;height:7px;background:#1c5a20;"></div>
<div style="left:213px;top:-6px;width:10px;height:8px;background:#b05a18;"></div>
</div>
<span class="ts" style="left:628.5px;width:400px;text-align:center;transform-origin:50% 50%;top:10.0px;font-size:12px;line-height:15px;color:#fff;transform:scaleX(0.96);text-shadow:1px 1px 1px #000,1px 1px 2px #000,0 0 2px #000,0 1px 3px rgba(0,0,0,.7);">pcsx2 -</span>
<span class="ts" style="left:628.5px;width:400px;text-align:center;transform-origin:50% 50%;top:24.5px;font-size:12px;line-height:15px;color:#fff;transform:scaleX(0.96);text-shadow:1px 1px 1px #000,1px 1px 2px #000,0 0 2px #000,0 1px 3px rgba(0,0,0,.7);">Shortcut</span>
<span class="ts" style="left:704.6px;width:400px;text-align:center;transform-origin:50% 50%;top:10.0px;font-size:12px;line-height:15px;color:#fff;transform:scaleX(0.96);text-shadow:1px 1px 1px #000,1px 1px 2px #000,0 0 2px #000,0 1px 3px rgba(0,0,0,.7);">asdasd.txt</span>
<span class="ts" style="left:780.8px;width:400px;text-align:center;transform-origin:50% 50%;top:10.0px;font-size:12px;line-height:15px;color:#fff;transform:scaleX(0.96);text-shadow:1px 1px 1px #000,1px 1px 2px #000,0 0 2px #000,0 1px 3px rgba(0,0,0,.7);">Firmware</span>
<span class="ts" style="left:780.8px;width:400px;text-align:center;transform-origin:50% 50%;top:24.5px;font-size:12px;line-height:15px;color:#fff;transform:scaleX(0.96);text-shadow:1px 1px 1px #000,1px 1px 2px #000,0 0 2px #000,0 1px 3px rgba(0,0,0,.7);">Fiberhome...</span>
<span class="ts" style="right:478.20000000000005px;transform-origin:100% 50%;top:10.0px;font-size:12px;line-height:15px;color:#fff;transform:scaleX(0.96);text-shadow:1px 1px 1px #000,1px 1px 2px #000,0 0 2px #000,0 1px 3px rgba(0,0,0,.7);">Google</span>
<span class="ts" style="right:480px;transform-origin:100% 50%;top:24.5px;font-size:12px;line-height:15px;color:#fff;transform:scaleX(0.96);text-shadow:1px 1px 1px #000,1px 1px 2px #000,0 0 2px #000,0 1px 3px rgba(0,0,0,.7);">Sheets</span>
<svg style="left:804px;top:58px;width:50px;height:50px" viewBox="-25 -25 50 50"><circle r="23.500" fill="#e33b2e"/><path d="M-20.780 -12A24 24 0 0 1 20.780 -12L0 -12A12 12 0 0 0 -10.390 6z" fill="#e33b2e"/><path d="M-20.780 -12A24 24 0 0 1 20.780 -12L0 -12A12 12 0 0 0 -10.390 6z" fill="#fbc116" transform="rotate(120)"/><path d="M-20.780 -12A24 24 0 0 1 20.780 -12L0 -12A12 12 0 0 0 -10.390 6z" fill="#2da94f" transform="rotate(240)"/><circle r="12.300" fill="#fff"/><circle r="9.700" fill="#3a7be8"/><circle cx="12.300" cy="12.500" r="11.600" fill="#dfe1e5"/><circle cx="12.300" cy="9.300" r="2.600" fill="#5f6368"/><path d="M7.300 16.500c0-3 2.500-3.800 5-3.800s5 .8 5 3.800z" fill="#5f6368"/></svg>
<svg style="left:805px;top:94px;width:13px;height:13px" viewBox="0 0 13 13"><rect x=".5" y=".5" width="12" height="12" fill="#f4f6fa" stroke="#b8c0cc" stroke-width="1"/><path d="M4 11c-.3-3.200 1.200-5.300 4.200-6" fill="none" stroke="#2a4f9f" stroke-width="2.300"/><path d="M6 2.300h5v5z" fill="#2a4f9f"/></svg>
<span class="ts" style="left:629px;width:400px;text-align:center;transform-origin:50% 50%;top:110.5px;font-size:12px;line-height:15px;color:#fff;transform:scaleX(0.96);text-shadow:1px 1px 1px #000,1px 1px 2px #000,0 0 2px #000,0 1px 3px rgba(0,0,0,.7);">Person 1 -</span>
<span class="ts" style="left:629px;width:400px;text-align:center;transform-origin:50% 50%;top:125.0px;font-size:12px;line-height:15px;color:#fff;transform:scaleX(0.96);text-shadow:1px 1px 1px #000,1px 1px 2px #000,0 0 2px #000,0 1px 3px rgba(0,0,0,.7);">Chrome</span>
<div style="left:762px;top:65px;width:8px;height:38px;background:#f4b400;border-radius:0 3px 3px 0;"></div>
<div style="left:762px;top:78px;width:3px;height:17px;background:#f8d060;"></div>
<span class="ts" style="right:461.5px;transform-origin:100% 50%;top:110.5px;font-size:12px;line-height:15px;color:#fff;transform:scaleX(0.96);text-shadow:1px 1px 1px #000,1px 1px 2px #000,0 0 2px #000,0 1px 3px rgba(0,0,0,.7);">Google Slides</span>
<svg style="left:805px;top:160px;width:48px;height:48px" viewBox="-24 -24 48 48"><defs><linearGradient id="rp" x1="0" y1="0" x2="0" y2="1"><stop offset="0" stop-color="#e4e8ec"/><stop offset="1" stop-color="#9aa2aa"/></linearGradient></defs><g transform="rotate(15)"><rect x="-18" y="-18" width="36" height="36" fill="url(#rp)"/><rect x="-3.600" y="-3.600" width="7.200" height="7.200" fill="#0a78d6"/></g></svg>
<svg style="left:805px;top:195px;width:13px;height:13px" viewBox="0 0 13 13"><rect x=".5" y=".5" width="12" height="12" fill="#f4f6fa" stroke="#b8c0cc" stroke-width="1"/><path d="M4 11c-.3-3.200 1.200-5.300 4.200-6" fill="none" stroke="#2a4f9f" stroke-width="2.300"/><path d="M6 2.300h5v5z" fill="#2a4f9f"/></svg>
<span class="ts" style="left:793px;transform-origin:0 50%;top:211.5px;font-size:12px;line-height:15px;color:#fff;transform:scaleX(0.97);text-shadow:1px 1px 1px #000,1px 1px 2px #000,0 0 2px #000,0 1px 3px rgba(0,0,0,.7);">Roblox Player</span>
<span class="ts" style="right:463px;transform-origin:100% 50%;top:211.5px;font-size:12px;line-height:15px;color:#fff;transform:scaleX(0.96);text-shadow:1px 1px 1px #000,1px 1px 2px #000,0 0 2px #000,0 1px 3px rgba(0,0,0,.7);">HD-Launc...</span>
<span class="ts" style="right:471.5px;transform-origin:100% 50%;top:226.5px;font-size:12px;line-height:15px;color:#fff;transform:scaleX(0.96);text-shadow:1px 1px 1px #000,1px 1px 2px #000,0 0 2px #000,0 1px 3px rgba(0,0,0,.7);">- Shortcut</span>
<div style="left:762px;top:165px;width:7px;height:40px;background:#e8e8e8;border-right:1px solid #b0b0b0;"></div>
<svg style="left:805px;top:261px;width:48px;height:48px" viewBox="-24 -24 48 48"><defs><linearGradient id="rs" x1="0" y1="0" x2="0" y2="1"><stop offset="0" stop-color="#0ee0ff"/><stop offset="1" stop-color="#08a4f2"/></linearGradient></defs><g transform="rotate(15)"><path d="M-18 2H-2V-2.500H8V2H18V18H-18z" fill="#0c98f0"/><path d="M-18 -18H18V.5H5.500V-4H-4.500V.5H-18z" fill="url(#rs)"/></g></svg>
<svg style="left:805px;top:296px;width:13px;height:13px" viewBox="0 0 13 13"><rect x=".5" y=".5" width="12" height="12" fill="#f4f6fa" stroke="#b8c0cc" stroke-width="1"/><path d="M4 11c-.3-3.200 1.200-5.300 4.200-6" fill="none" stroke="#2a4f9f" stroke-width="2.300"/><path d="M6 2.300h5v5z" fill="#2a4f9f"/></svg>
<span class="ts" style="left:629px;width:400px;text-align:center;transform-origin:50% 50%;top:313.0px;font-size:12px;line-height:15px;color:#fff;transform:scaleX(0.96);text-shadow:1px 1px 1px #000,1px 1px 2px #000,0 0 2px #000,0 1px 3px rgba(0,0,0,.7);">Roblox</span>
<span class="ts" style="left:629px;width:400px;text-align:center;transform-origin:50% 50%;top:327.5px;font-size:12px;line-height:15px;color:#fff;transform:scaleX(0.96);text-shadow:1px 1px 1px #000,1px 1px 2px #000,0 0 2px #000,0 1px 3px rgba(0,0,0,.7);">Studio</span>
<div style="left:762px;top:262px;width:11px;height:44px;background:#f0b400;border-right:3px solid #181818;border-bottom:3px solid #181818;"></div>
<div style="left:762px;top:272px;width:4px;height:22px;background:#181818;"></div>
<span class="ts" style="right:478px;transform-origin:100% 50%;top:313.0px;font-size:12px;line-height:15px;color:#fff;transform:scaleX(0.96);text-shadow:1px 1px 1px #000,1px 1px 2px #000,0 0 2px #000,0 1px 3px rgba(0,0,0,.7);">Security</span>
<span class="ts" style="right:473.5px;transform-origin:100% 50%;top:327.5px;font-size:12px;line-height:15px;color:#fff;transform:scaleX(0.96);text-shadow:1px 1px 1px #000,1px 1px 2px #000,0 0 2px #000,0 1px 3px rgba(0,0,0,.7);">Launcher</span>
<svg style="left:808px;top:370px;width:43px;height:30px" viewBox="0 0 43 30"><rect x=".5" y=".5" width="42" height="29" fill="#fafafa" stroke="#a8a8a8"/><rect x="1" y="1" width="41" height="3.500" fill="#8a8a8a"/><rect x="9" y="6" width="18" height="21" fill="#0a78d6"/><path d="M3 8h4.500M3 11h4.500M3 14h4.500M3 17h4.500M29 8h11M29 11h11M29 14h11M29 17h11M29 20h11M29 23h8" stroke="#a0a0a0" stroke-width="1"/></svg>
<svg style="left:805px;top:397px;width:13px;height:13px" viewBox="0 0 13 13"><rect x=".5" y=".5" width="12" height="12" fill="#f4f6fa" stroke="#b8c0cc" stroke-width="1"/><path d="M4 11c-.3-3.200 1.200-5.300 4.200-6" fill="none" stroke="#2a4f9f" stroke-width="2.300"/><path d="M6 2.300h5v5z" fill="#2a4f9f"/></svg>
<span class="ts" style="left:629px;width:400px;text-align:center;transform-origin:50% 50%;top:413.5px;font-size:12px;line-height:15px;color:#fff;transform:scaleX(0.94);text-shadow:1px 1px 1px #000,1px 1px 2px #000,0 0 2px #000,0 1px 3px rgba(0,0,0,.7);">SideQuest</span>
<svg style="left:762px;top:362px;width:16px;height:42px" viewBox="0 0 16 42"><circle cx="-6" cy="17" r="19" fill="#2a7ad0"/><path d="M-6 -2a19 19 0 0 1 17 12c-6-3-12 0-17 3z" fill="#b8d8f0" opacity=".7"/><path d="M0 24l13 6-13 7z" fill="#18b018"/><path d="M-8 30h14v6h-14z" fill="#106810"/></svg>
<span class="ts" style="right:476.5px;transform-origin:100% 50%;top:413.5px;font-size:12px;line-height:15px;color:#fff;transform:scaleX(0.96);text-shadow:1px 1px 1px #000,1px 1px 2px #000,0 0 2px #000,0 1px 3px rgba(0,0,0,.7);">Internet</span>
<span class="ts" style="right:471.4px;transform-origin:100% 50%;top:428.5px;font-size:12px;line-height:15px;color:#fff;transform:scaleX(0.96);text-shadow:1px 1px 1px #000,1px 1px 2px #000,0 0 2px #000,0 1px 3px rgba(0,0,0,.7);">Downlo...</span>
<svg style="left:810px;top:460px;width:44px;height:54px" viewBox="0 0 44 54"><rect x="6" y="3" width="27" height="50" rx="3" fill="#1858b8" stroke="#0a3a88"/><rect x="9" y="37" width="21" height="13" rx="2" fill="#e8e8e0"/><path d="M9 43.500h21M16 37v13M23 37v13" stroke="#1858b8" stroke-width="1"/><path d="M15 10l24-4 3 14-23 5z" fill="#f4d060" stroke="#b89020" stroke-width=".8"/><path d="M15 10l14 7 10-11" fill="none" stroke="#b89020" stroke-width=".8"/><path d="M10 27c0-7 5-9 11-8v-3l7 6-7 6v-3c-4-1-7 0-8 4z" fill="#40c030" stroke="#208018" stroke-width=".8"/></svg>
<svg style="left:805px;top:498px;width:13px;height:13px" viewBox="0 0 13 13"><rect x=".5" y=".5" width="12" height="12" fill="#f4f6fa" stroke="#b8c0cc" stroke-width="1"/><path d="M4 11c-.3-3.200 1.200-5.300 4.200-6" fill="none" stroke="#2a4f9f" stroke-width="2.300"/><path d="M6 2.300h5v5z" fill="#2a4f9f"/></svg>
<span class="ts" style="left:793px;transform-origin:0 50%;top:514.0px;font-size:12px;line-height:15px;color:#fff;transform:scaleX(0.97);text-shadow:1px 1px 1px #000,1px 1px 2px #000,0 0 2px #000,0 1px 3px rgba(0,0,0,.7);">SMS Deliverer</span>
<div style="left:762px;top:470px;width:6px;height:40px;background:#ececec;border-right:1px solid #a0a0a0;"></div>
<span class="ts" style="right:462.4px;transform-origin:100% 50%;top:514.0px;font-size:12px;line-height:15px;color:#fff;transform:scaleX(0.96);text-shadow:1px 1px 1px #000,1px 1px 2px #000,0 0 2px #000,0 1px 3px rgba(0,0,0,.7);">Downloader</span>
<svg style="left:806px;top:562px;width:48px;height:54px" viewBox="0 0 48 54"><defs><linearGradient id="phg" x1="0" y1="0" x2="1" y2="0"><stop offset="0" stop-color="#5a8cff"/><stop offset=".35" stop-color="#2a5ae8"/><stop offset="1" stop-color="#1030b0"/></linearGradient></defs><g transform="rotate(-28 24 27)"><rect x="21" y="-3" width="3.500" height="8" rx="1.500" fill="#1838b0"/><rect x="13" y="3" width="22" height="49" rx="8" fill="url(#phg)" stroke="#10289a" stroke-width="1"/><rect x="16.500" y="8" width="15" height="14" rx="3" fill="#4a5a18" stroke="#0a1860"/><g fill="#88a8ff"><circle cx="19" cy="28" r="1.600"/><circle cx="24" cy="28" r="1.600"/><circle cx="29" cy="28" r="1.600"/><circle cx="19" cy="33.500" r="1.600"/><circle cx="24" cy="33.500" r="1.600"/><circle cx="29" cy="33.500" r="1.600"/><circle cx="19" cy="39" r="1.600"/><circle cx="24" cy="39" r="1.600"/><circle cx="29" cy="39" r="1.600"/><circle cx="24" cy="44.500" r="1.600"/></g></g></svg>
<svg style="left:805px;top:599px;width:13px;height:13px" viewBox="0 0 13 13"><rect x=".5" y=".5" width="12" height="12" fill="#f4f6fa" stroke="#b8c0cc" stroke-width="1"/><path d="M4 11c-.3-3.200 1.200-5.300 4.200-6" fill="none" stroke="#2a4f9f" stroke-width="2.300"/><path d="M6 2.300h5v5z" fill="#2a4f9f"/></svg>
<span class="ts" style="left:629px;width:400px;text-align:center;transform-origin:50% 50%;top:616.0px;font-size:12px;line-height:15px;color:#fff;transform:scaleX(0.96);text-shadow:1px 1px 1px #000,1px 1px 2px #000,0 0 2px #000,0 1px 3px rgba(0,0,0,.7);">SMSCaster</span>
<span class="ts" style="left:629px;width:400px;text-align:center;transform-origin:50% 50%;top:631.0px;font-size:12px;line-height:15px;color:#fff;transform:scaleX(0.96);text-shadow:1px 1px 1px #000,1px 1px 2px #000,0 0 2px #000,0 1px 3px rgba(0,0,0,.7);">E-Marketer</span>
<svg style="left:762px;top:572px;width:12px;height:31px" viewBox="0 0 12 31"><rect x="-6" y=".5" width="17" height="30" fill="#f4f4f4" stroke="#a0a0a0"/><rect x="-6" y="1" width="16.500" height="3" fill="#c8c8c8"/><path d="M-4 8h12M-4 11h12M-4 14h12M-4 17h12M-4 20h12M-4 23h12" stroke="#909090" stroke-width="1"/></svg>
<span class="ts" style="right:472.70000000000005px;transform-origin:100% 50%;top:616.0px;font-size:12px;line-height:15px;color:#fff;transform:scaleX(0.96);text-shadow:1px 1px 1px #000,1px 1px 2px #000,0 0 2px #000,0 1px 3px rgba(0,0,0,.7);">Copyright</span>
<svg style="left:884px;top:570px;width:42px;height:32px" viewBox="0 0 42 32"><defs><linearGradient id="gb" x1="0" y1="0" x2="0" y2="1"><stop offset="0" stop-color="#dcdcdc"/><stop offset="1" stop-color="#f6f6f6"/></linearGradient></defs><rect x=".5" y=".5" width="41" height="31" fill="url(#gb)" stroke="#cfcfcf"/><g fill="none" stroke="#b4bcc4"><circle cx="16.500" cy="15" r="6" stroke-width="4" stroke-dasharray="2.400 2.300"/><circle cx="16.500" cy="15" r="4.800" stroke-width="2.600"/><circle cx="28" cy="23" r="4.200" stroke-width="3.200" stroke-dasharray="1.900 1.870"/><circle cx="28" cy="23" r="3.300" stroke-width="2"/></g><circle cx="16.500" cy="15" r="3" fill="#fafafa"/><circle cx="28" cy="23" r="2" fill="#fafafa"/></svg>
<span class="ts" style="left:705px;width:400px;text-align:center;transform-origin:50% 50%;top:616.0px;font-size:12px;line-height:15px;color:#fff;transform:scaleX(0.96);text-shadow:1px 1px 1px #000,1px 1px 2px #000,0 0 2px #000,0 1px 3px rgba(0,0,0,.7);">autoconne...</span>
<svg style="left:956px;top:568px;width:50px;height:42px" viewBox="0 0 50 42"><defs><linearGradient id="wbelt" x1="0" y1="0" x2="1" y2="0"><stop offset="0" stop-color="#a85410"/><stop offset=".5" stop-color="#d88a30"/><stop offset="1" stop-color="#a85410"/></linearGradient></defs><rect x="2" y="0" width="46" height="13" rx="2" fill="#8a1830"/><rect x="1" y="12" width="48" height="14" rx="3" fill="#4040b8"/><rect x="1" y="12" width="48" height="5" rx="2" fill="#5a5ad0"/><rect x="1" y="26" width="48" height="13" rx="3" fill="#148838"/><rect x="1" y="26" width="48" height="4" rx="2" fill="#28a850"/><rect x="4.500" y="15" width="2.500" height="8" fill="#f0c020"/><rect x="4.500" y="29" width="2.500" height="8" fill="#f0c020"/><rect x="19" y="0" width="13" height="40" fill="url(#wbelt)"/><rect x="17.500" y="15" width="16" height="12" rx="2" fill="none" stroke="#e8e8ec" stroke-width="2.400"/><rect x="24.300" y="17" width="2.400" height="9" fill="#f0f0f0"/></svg>
<span class="ts" style="left:780.5px;width:400px;text-align:center;transform-origin:50% 50%;top:616.0px;font-size:12px;line-height:15px;color:#fff;transform:scaleX(0.96);text-shadow:1px 1px 1px #000,1px 1px 2px #000,0 0 2px #000,0 1px 3px rgba(0,0,0,.7);">telegram_v...</span>
<div style="left:812px;top:665px;width:40px;height:6px;background:#b8b020;border-radius:20px 20px 0 0;"></div>
</div>
<div style="left:860px;top:62px;width:400px;height:514px;background:#fff;border:1px solid #4a5058;box-shadow:0 0 8px 0 rgba(0,0,40,.4);"></div>
<svg style="left:869px;top:67px;width:17px;height:18px" viewBox="0 0 17 18"><path d="M2.500 2.500h11.500v14H1.500z" fill="#bfe4f4" stroke="#6a8a98" stroke-width="1"/><path d="M3.500 6h9M3.500 8.500h9M3.500 11h9M3.500 13.500h9" stroke="#7ab0c8" stroke-width=".9"/><path d="M3 1v3M5.500 1v3M8 1v3M10.500 1v3M13 1v3" stroke="#404850" stroke-width="1"/></svg>
<span class="ts" style="left:890.5px;transform-origin:0 50%;top:69.0px;font-size:12px;line-height:16px;color:#000;">ppp-secrets.txt - Notepad</span>
<span class="ts" style="left:868px;transform-origin:0 50%;top:94.0px;font-size:12px;line-height:16px;color:#000;transform:scaleX(0.93);">File</span>
<span class="ts" style="left:900px;transform-origin:0 50%;top:94.0px;font-size:12px;line-height:16px;color:#000;transform:scaleX(0.95);">Edit</span>
<span class="ts" style="left:934px;transform-origin:0 50%;top:94.0px;font-size:12px;line-height:16px;color:#000;">Format</span>
<span class="ts" style="left:986px;transform-origin:0 50%;top:94.0px;font-size:12px;line-height:16px;color:#000;transform:scaleX(0.97);">View</span>
<span class="ts" style="left:1025px;transform-origin:0 50%;top:94.0px;font-size:12px;line-height:16px;color:#000;">Help</span>
<div style="left:861px;top:111px;width:389px;height:1px;background:#f0f0f0;"></div>
<div style="left:861px;top:553px;width:389px;height:22px;background:#f0f0f0;"></div>
<div style="left:1182px;top:555px;width:1px;height:19px;background:#d8d8d8;"></div>
<span class="ts" style="left:1193.5px;transform-origin:0 50%;top:558.0px;font-size:12px;line-height:16px;color:#000;transform:scaleX(0.925);">Ln 1, Col 1</span>
<div style="left:861px;top:112px;width:389px;height:441px;overflow:hidden">
<span class="tm" style="left:4.7999999999999545px;top:1.7999999999999972px;font-size:13.3px;line-height:18px;color:#000;transform:scaleY(1.07);transform-origin:0 50%"># mar/ 1/2023 22:10:21 by RouterOS 6.49.6</span>
<span class="tm" style="left:4.7999999999999545px;top:19.80000000000001px;font-size:13.3px;line-height:18px;color:#000;transform:scaleY(1.07);transform-origin:0 50%"># software id = INDZ-N7YF</span>
<span class="tm" style="left:4.7999999999999545px;top:37.80000000000001px;font-size:13.3px;line-height:18px;color:#000;transform:scaleY(1.07);transform-origin:0 50%">#</span>
<span class="tm" style="left:4.7999999999999545px;top:55.80000000000001px;font-size:13.3px;line-height:18px;color:#000;transform:scaleY(1.07);transform-origin:0 50%"> # NAME                   TYPE</span>
<span class="tm" style="left:4.7999999999999545px;top:73.80000000000001px;font-size:13.3px;line-height:18px;color:#000;transform:scaleY(1.07);transform-origin:0 50%"> 0 skins                  directory</span>
<span class="tm" style="left:4.7999999999999545px;top:91.80000000000001px;font-size:13.3px;line-height:18px;color:#000;transform:scaleY(1.07);transform-origin:0 50%"> 1 hotspotVlan            directory</span>
<span class="tm" style="left:4.7999999999999545px;top:109.80000000000001px;font-size:13.3px;line-height:18px;color:#000;transform:scaleY(1.07);transform-origin:0 50%"> 2 hotspotVlan/img        directory</span>
<span class="tm" style="left:4.7999999999999545px;top:127.80000000000001px;font-size:13.3px;line-height:18px;color:#000;transform:scaleY(1.07);transform-origin:0 50%"> 3 hotspotVlan/alogin.... .html file</span>
<span class="tm" style="left:4.7999999999999545px;top:145.8px;font-size:13.3px;line-height:18px;color:#000;transform:scaleY(1.07);transform-origin:0 50%"> 4 hotspotVlan/error.html .html file</span>
<span class="tm" style="left:4.7999999999999545px;top:163.8px;font-size:13.3px;line-height:18px;color:#000;transform:scaleY(1.07);transform-origin:0 50%"> 5 hotspotVlan/errors.txt .txt file</span>
<span class="tm" style="left:4.7999999999999545px;top:181.8px;font-size:13.3px;line-height:18px;color:#000;transform:scaleY(1.07);transform-origin:0 50%"> 6 hotspotVlan/img/int... .jpg file</span>
<span class="tm" style="left:4.7999999999999545px;top:199.8px;font-size:13.3px;line-height:18px;color:#000;transform:scaleY(1.07);transform-origin:0 50%"> 7 hotspotVlan/login w... .html file</span>
<span class="tm" style="left:4.7999999999999545px;top:217.8px;font-size:13.3px;line-height:18px;color:#000;transform:scaleY(1.07);transform-origin:0 50%"> 8 hotspotVlan/login.css  .css file</span>
<span class="tm" style="left:4.7999999999999545px;top:235.8px;font-size:13.3px;line-height:18px;color:#000;transform:scaleY(1.07);transform-origin:0 50%"> 9 hotspotVlan/login.html .html file</span>
<span class="tm" style="left:4.7999999999999545px;top:253.8px;font-size:13.3px;line-height:18px;color:#000;transform:scaleY(1.07);transform-origin:0 50%">10 hotspotVlan/logo.png   .png file</span>
<span class="tm" style="left:4.7999999999999545px;top:271.8px;font-size:13.3px;line-height:18px;color:#000;transform:scaleY(1.07);transform-origin:0 50%">11 hotspotVlan/logout.... .html file</span>
<span class="tm" style="left:4.7999999999999545px;top:289.8px;font-size:13.3px;line-height:18px;color:#000;transform:scaleY(1.07);transform-origin:0 50%">12 hotspotVlan/md5.js     .js file</span>
<span class="tm" style="left:4.7999999999999545px;top:307.8px;font-size:13.3px;line-height:18px;color:#000;transform:scaleY(1.07);transform-origin:0 50%">13 hotspotVlan/next.png   .png file</span>
<span class="tm" style="left:4.7999999999999545px;top:325.8px;font-size:13.3px;line-height:18px;color:#000;transform:scaleY(1.07);transform-origin:0 50%">14 hotspotVlan/radvert... .html file</span>
<span class="tm" style="left:4.7999999999999545px;top:343.8px;font-size:13.3px;line-height:18px;color:#000;transform:scaleY(1.07);transform-origin:0 50%">15 hotspotVlan/redirec... .html file</span>
<span class="tm" style="left:4.7999999999999545px;top:361.8px;font-size:13.3px;line-height:18px;color:#000;transform:scaleY(1.07);transform-origin:0 50%">16 hotspotVlan/rlogin.... .html file</span>
<span class="tm" style="left:4.7999999999999545px;top:379.8px;font-size:13.3px;line-height:18px;color:#000;transform:scaleY(1.07);transform-origin:0 50%">17 hotspotVlan/status.... .html file</span>
<span class="tm" style="left:4.7999999999999545px;top:397.79999999999995px;font-size:13.3px;line-height:18px;color:#000;transform:scaleY(1.07);transform-origin:0 50%">18 hotspotVlan/style.css  .css file</span>
<span class="tm" style="left:4.7999999999999545px;top:415.79999999999995px;font-size:13.3px;line-height:18px;color:#000;transform:scaleY(1.07);transform-origin:0 50%">19 pub                    directory</span>
<span class="tm" style="left:4.7999999999999545px;top:433.79999999999995px;font-size:13.3px;line-height:18px;color:#000;transform:scaleY(1.07);transform-origin:0 50%">20 queue-simple.rsc       script</span>
</div>
<div style="left:866px;top:113px;width:1px;height:17px;background:#000;"></div>
</div></body></html>
